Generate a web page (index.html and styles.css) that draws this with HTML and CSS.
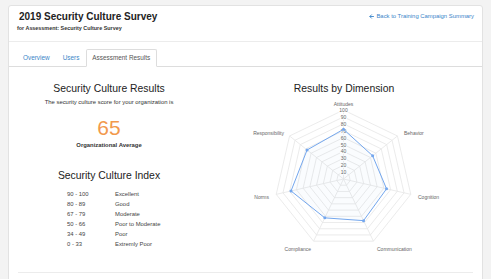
FILE: index.html
```html
<!DOCTYPE html>
<html lang="en">
<head>
<meta charset="utf-8">
<title>2019 Security Culture Survey</title>
<link rel="stylesheet" href="styles.css">
</head>
<body>
<div class="page">
  <div class="card">
    <header class="card-header">
      <div class="titles">
        <h1 class="title">2019 Security Culture Survey</h1>
        <p class="subtitle">for Assessment: Security Culture Survey</p>
      </div>
      <a class="back-link" href="#"><svg class="back-icon" viewBox="0 0 10 10" width="5" height="5"><path d="M9 5H2.2M5 1.6L1.6 5L5 8.4" fill="none" stroke="currentColor" stroke-width="1.8" stroke-linecap="round" stroke-linejoin="round"/></svg>Back to Training Campaign Summary</a>
    </header>
    <nav class="tabs">
      <a class="tab" href="#">Overview</a>
      <a class="tab" href="#">Users</a>
      <a class="tab active" href="#">Assessment Results</a>
    </nav>
    <section class="content">
      <div class="col-left">
        <h3 class="section-title">Security Culture Results</h3>
        <p class="lead">The security culture score for your organization is</p>
        <div class="score">65</div>
        <div class="score-label">Organizational Average</div>
        <h3 class="section-title index-title">Security Culture Index</h3>
        <div class="index-table">
          <span>90 - 100</span><span>Excellent</span>
          <span>80 - 89</span><span>Good</span>
          <span>67 - 79</span><span>Moderate</span>
          <span>50 - 66</span><span>Poor to Moderate</span>
          <span>34 - 49</span><span>Poor</span>
          <span>0 - 33</span><span>Extremly Poor</span>
        </div>
      </div>
      <div class="col-right">
        <h3 class="section-title">Results by Dimension</h3>
        <svg class="radar" width="260" height="165" viewBox="0 0 260 165">
          <g transform="translate(129.5,83)" class="grid">
            <polygon transform="scale(0.1)" points="0,-69 53.95,-43.02 67.27,15.35 29.94,62.17 -29.94,62.17 -67.27,15.35 -53.95,-43.02"/>
            <polygon transform="scale(0.2)" points="0,-69 53.95,-43.02 67.27,15.35 29.94,62.17 -29.94,62.17 -67.27,15.35 -53.95,-43.02"/>
            <polygon transform="scale(0.3)" points="0,-69 53.95,-43.02 67.27,15.35 29.94,62.17 -29.94,62.17 -67.27,15.35 -53.95,-43.02"/>
            <polygon transform="scale(0.4)" points="0,-69 53.95,-43.02 67.27,15.35 29.94,62.17 -29.94,62.17 -67.27,15.35 -53.95,-43.02"/>
            <polygon transform="scale(0.5)" points="0,-69 53.95,-43.02 67.27,15.35 29.94,62.17 -29.94,62.17 -67.27,15.35 -53.95,-43.02"/>
            <polygon transform="scale(0.6)" points="0,-69 53.95,-43.02 67.27,15.35 29.94,62.17 -29.94,62.17 -67.27,15.35 -53.95,-43.02"/>
            <polygon transform="scale(0.7)" points="0,-69 53.95,-43.02 67.27,15.35 29.94,62.17 -29.94,62.17 -67.27,15.35 -53.95,-43.02"/>
            <polygon transform="scale(0.8)" points="0,-69 53.95,-43.02 67.27,15.35 29.94,62.17 -29.94,62.17 -67.27,15.35 -53.95,-43.02"/>
            <polygon transform="scale(0.9)" points="0,-69 53.95,-43.02 67.27,15.35 29.94,62.17 -29.94,62.17 -67.27,15.35 -53.95,-43.02"/>
            <polygon points="0,-69 53.95,-43.02 67.27,15.35 29.94,62.17 -29.94,62.17 -67.27,15.35 -53.95,-43.02"/>
            <line x1="0" y1="0" x2="0" y2="-69"/>
            <line x1="0" y1="0" x2="53.95" y2="-43.02"/>
            <line x1="0" y1="0" x2="67.27" y2="15.35"/>
            <line x1="0" y1="0" x2="29.94" y2="62.17"/>
            <line x1="0" y1="0" x2="-29.94" y2="62.17"/>
            <line x1="0" y1="0" x2="-67.27" y2="15.35"/>
            <line x1="0" y1="0" x2="-53.95" y2="-43.02"/>
          </g>
          <g transform="translate(129.5,83)" class="ticks">
            <rect x="-3.5" y="-9.6" width="7" height="5.4"/><text x="0" y="-6.9">10</text>
            <rect x="-3.5" y="-16.5" width="7" height="5.4"/><text x="0" y="-13.8">20</text>
            <rect x="-3.5" y="-23.4" width="7" height="5.4"/><text x="0" y="-20.7">30</text>
            <rect x="-3.5" y="-30.3" width="7" height="5.4"/><text x="0" y="-27.6">40</text>
            <rect x="-3.5" y="-37.2" width="7" height="5.4"/><text x="0" y="-34.5">50</text>
            <rect x="-3.5" y="-44.1" width="7" height="5.4"/><text x="0" y="-41.4">60</text>
            <rect x="-3.5" y="-51" width="7" height="5.4"/><text x="0" y="-48.3">70</text>
            <rect x="-3.5" y="-57.9" width="7" height="5.4"/><text x="0" y="-55.2">80</text>
            <rect x="-3.5" y="-64.8" width="7" height="5.4"/><text x="0" y="-62.1">90</text>
            <rect x="-5" y="-71.7" width="10" height="5.4"/><text x="0" y="-69">100</text>
          </g>
          <g transform="translate(129.5,83)" class="data">
            <polygon points="0,-49.68 29.13,-23.23 43.05,9.83 20.06,41.65 -18.71,38.85 -52.47,11.98 -36.41,-29.04"/>
            <circle cx="0" cy="-49.68" r="1.5"/>
            <circle cx="29.13" cy="-23.23" r="1.5"/>
            <circle cx="43.05" cy="9.83" r="1.5"/>
            <circle cx="20.06" cy="41.65" r="1.5"/>
            <circle cx="-18.71" cy="38.85" r="1.5"/>
            <circle cx="-52.47" cy="11.98" r="1.5"/>
            <circle cx="-36.41" cy="-29.04" r="1.5"/>
          </g>
          <g class="point-labels">
            <text x="129.5" y="8" text-anchor="middle">Attitudes</text>
            <text x="190" y="36.7" text-anchor="start">Behavior</text>
            <text x="204" y="101" text-anchor="start">Cognition</text>
            <text x="163" y="153" text-anchor="start">Communication</text>
            <text x="97" y="153" text-anchor="end">Compliance</text>
            <text x="55" y="101" text-anchor="end">Norms</text>
            <text x="70" y="37" text-anchor="end">Responsibility</text>
          </g>
        </svg>
      </div>
    </section>
  </div>
</div>
</body>
</html>
```

FILE: styles.css
```css
html, body {
  margin: 0;
  padding: 0;
}

body {
  background: #f3f3f3;
  font-family: "Liberation Sans", Arial, Helvetica, sans-serif;
  color: #333;
}

.page {
  padding: 5px 8px 0 8px;
}

.card {
  background: #fff;
  border: 1px solid #e2e2e2;
  border-radius: 3px;
  height: 300px;
  box-sizing: border-box;
}

.card-header {
  display: flex;
  justify-content: space-between;
  align-items: flex-start;
  height: 36px;
  box-sizing: border-box;
  padding: 5px 8px 0 10px;
  border-bottom: 1px solid #ececec;
}

.title {
  margin: 0;
  font-size: 10px;
  line-height: 12px;
  font-weight: bold;
  color: #222;
}

.subtitle {
  margin: 1.5px 0 0 -2px;
  font-size: 5.4px;
  line-height: 7px;
  font-weight: bold;
  color: #333;
}

.back-link {
  display: flex;
  align-items: center;
  gap: 2px;
  margin-top: 1px;
  font-size: 5.9px;
  line-height: 8px;
  color: #3a84c9;
  text-decoration: none;
}

.back-icon {
  display: block;
}

.tabs {
  display: flex;
  padding: 7px 0 0 7.5px;
  border-bottom: 1px solid #dddddd;
}

.tab {
  display: block;
  font-size: 6.4px;
  line-height: 16px;
  padding: 0 5.5px;
  border: 1px solid transparent;
  border-radius: 2px 2px 0 0;
  margin-bottom: -1px;
  color: #3a86c8;
  text-decoration: none;
}

.tab.active {
  color: #555;
  background: #fff;
  border-color: #dddddd;
  border-bottom-color: #fff;
}

.content {
  display: grid;
  grid-template-columns: 182px 1fr;
  column-gap: 14px;
  margin: 0 9px;
  padding-top: 15px;
  height: 206px;
  box-sizing: border-box;
  border-bottom: 1px solid #ececec;
}

.col-left,
.col-right {
  text-align: center;
}

.section-title {
  margin: 0;
  font-size: 10.4px;
  line-height: 14px;
  font-weight: normal;
  color: #222;
}

.lead {
  margin: 1.5px 0 0 0;
  font-size: 5.9px;
  line-height: 8px;
  color: #333;
}

.score {
  margin-top: 10px;
  font-size: 21px;
  line-height: 24px;
  color: #f2994d;
}

.score-label {
  margin-top: 1px;
  font-size: 5.9px;
  line-height: 8px;
  font-weight: bold;
  color: #333;
}

.index-title {
  margin-top: 20px;
}

.index-table {
  display: grid;
  grid-template-columns: 48px auto;
  margin: 6px 0 0 49px;
  text-align: left;
  font-size: 5.9px;
  line-height: 10px;
  color: #444;
}

.radar {
  display: block;
}

.grid polygon,
.grid line {
  fill: none;
  stroke: #e6e6e6;
  stroke-width: 0.8;
  vector-effect: non-scaling-stroke;
}

.ticks rect {
  fill: #fff;
}

.ticks text {
  font-family: "Liberation Sans", Arial, sans-serif;
  font-size: 5px;
  fill: #666;
  text-anchor: middle;
  dominant-baseline: central;
}

.data polygon {
  fill: rgba(116, 167, 238, 0.04);
  stroke: #74a7ee;
  stroke-width: 1;
}

.data circle {
  fill: #74a7ee;
}

.point-labels text {
  font-family: "Liberation Sans", Arial, sans-serif;
  font-size: 5px;
  fill: #666;
  dominant-baseline: central;
}
```
